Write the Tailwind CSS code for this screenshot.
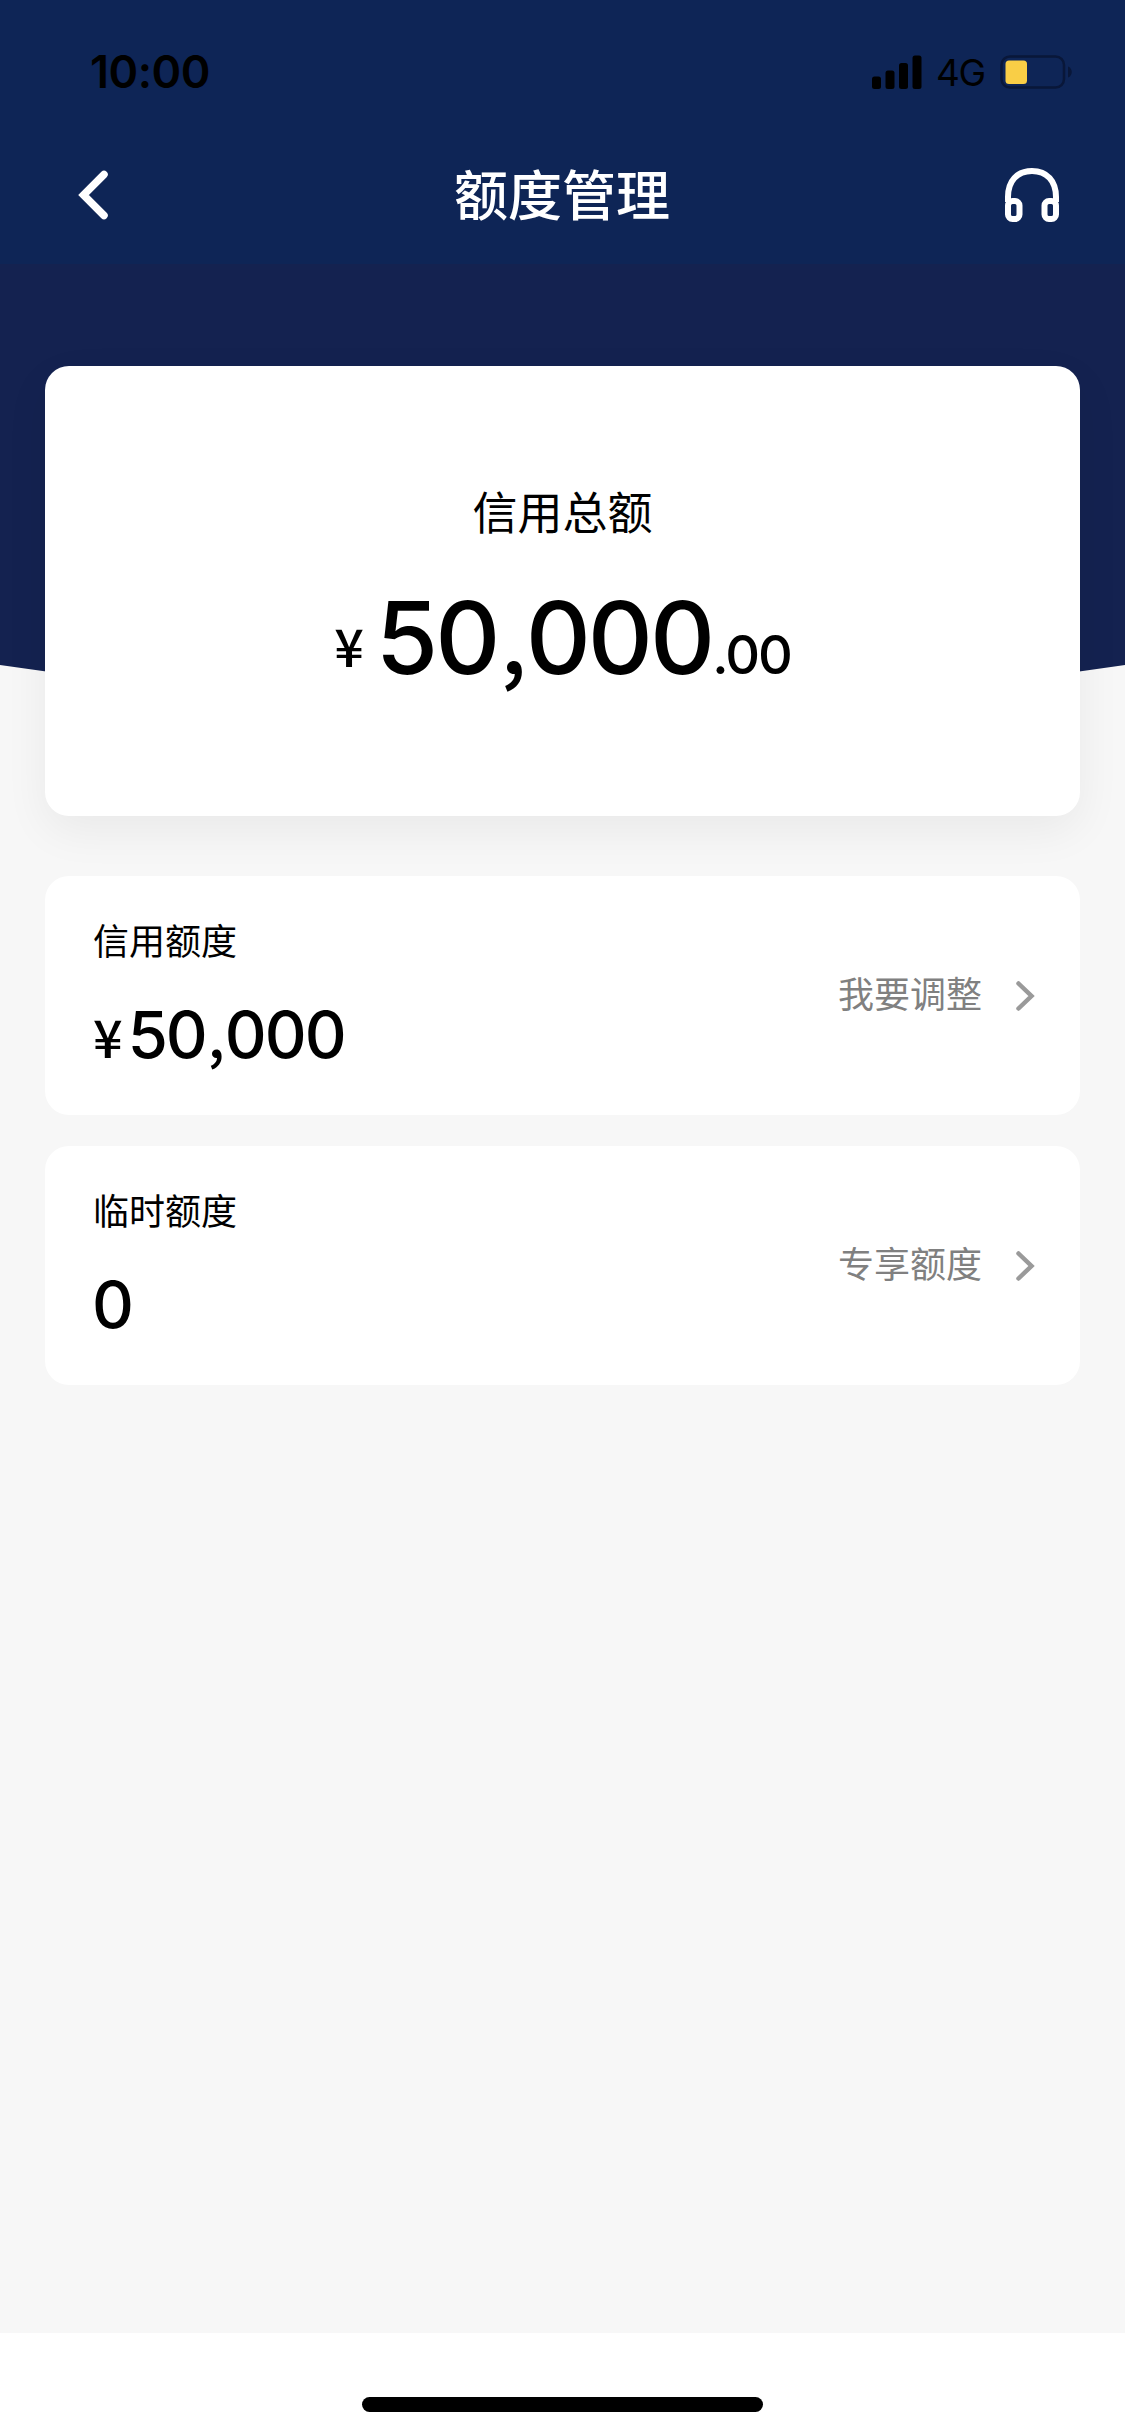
<!DOCTYPE html>
<html lang="zh-CN">
<head>
<meta charset="utf-8">
<title>额度管理</title>
<script src="https://cdn.jsdelivr.net/npm/@tailwindcss/browser@4"></script>
</head>
<body class="bg-[#f7f7f7] font-['Inter','Noto_Sans_CJK_SC',sans-serif] text-black">
<div class="relative flex h-[2435px] w-[1125px] flex-col overflow-hidden">
  <header class="relative z-10 h-[264px] bg-[#0e2556]">
    <div class="flex h-[143px] items-center justify-between pr-[53px] pl-[90px]">
      <span class="text-[45px] leading-none font-semibold tracking-[-0.5px]">10:00</span>
      <div class="flex items-center">
        <svg class="h-[34px] w-[50px]" viewBox="0 0 50 34">
          <rect x="0" y="21.500" width="9" height="12.500" rx="2.500"/>
          <rect x="13.500" y="15.500" width="9" height="18.500" rx="2.500"/>
          <rect x="27" y="8" width="9" height="26" rx="2.500"/>
          <rect x="40.500" y="0.500" width="9" height="33.500" rx="2.500"/>
        </svg>
        <span class="ml-[14px] w-[64px] pt-[2px] text-[37px] leading-none tracking-[-1.500px]">4G</span>
        <svg class="h-[34px] w-[72px]" viewBox="0 0 72 34">
          <rect x="1.500" y="1.500" width="62.500" height="31" rx="8.500" fill="none" stroke="#091739" stroke-width="2.500"/>
          <rect x="5.500" y="5.500" width="21.500" height="23.500" rx="3.500" fill="#f9ce46"/>
          <path d="M68 11.500c5 1.500 5 9.500 0 11z" fill="#091739"/>
        </svg>
      </div>
    </div>
    <div class="grid h-[104px] grid-cols-[1fr_auto_1fr] items-center pr-[65px] pl-[77px]">
      <svg class="h-[50px] w-[56px]" viewBox="0 0 56 50" fill="none" stroke="#fff" stroke-width="7.500" stroke-linecap="round"><path d="M27 4.500 6.500 25 27 45.500"/></svg>
      <h1 class="-ml-[13px] pt-[3px] text-[54px] leading-none font-medium text-white">额度管理</h1>
      <svg class="h-[56px] w-[56px] justify-self-end" viewBox="0 0 56 56" fill="none" stroke="#fff" stroke-width="6">
        <path d="M4 35V30C4 14 13 4 28 4s24 10 24 26v5"/>
        <rect x="4" y="34" width="11.500" height="18" rx="4.500"/>
        <rect x="40.500" y="34" width="11.500" height="18" rx="4.500"/>
      </svg>
    </div>
  </header>

  <svg class="absolute top-[264px] left-0 h-[480px] w-[1125px]" viewBox="0 0 1125 480"><path fill="#142250" d="M0 0H1125V401Q562.500 485 0 401Z"/></svg>

  <main class="relative flex flex-1 flex-col px-[45px] pt-[102px]">
    <section class="flex h-[450px] flex-col items-center rounded-[24px] bg-white pt-[124px] shadow-[0_15px_45px_rgba(0,0,0,0.06)]">
      <h2 class="text-[45px] leading-[48px]">信用总额</h2>
      <p class="mt-[39px] flex items-baseline leading-[120px] font-medium">
        <span class="relative -top-[7px] mr-[12px] font-['Noto_Sans_CJK_SC'] text-[52px] leading-none">¥</span>
        <span class="text-[101px] tracking-[-3px]">50<span class="mr-[2px] ml-[3px] font-['Noto_Sans_CJK_SC'] text-[88px] leading-none">,</span>000</span>
        <span class="text-[54px] tracking-[-2px]">.00</span>
      </p>
    </section>
    <section class="mt-[60px] flex h-[239px] items-center justify-between rounded-[24px] bg-white pr-[43px] pl-[48px]">
      <div class="flex flex-col pt-[6px]">
        <span class="text-[36px] leading-[40px]">信用额度</span>
        <span class="mt-[33px] flex items-baseline leading-[80px] font-medium"><span class="font-['Noto_Sans_CJK_SC'] text-[52px] leading-none">¥</span><span class="ml-[5px] text-[65px] tracking-[-2px]">50<span class="mr-[2px] ml-[2px] font-['Noto_Sans_CJK_SC'] text-[57px] leading-none">,</span>000</span></span>
      </div>
      <div class="flex items-center">
        <span class="-mt-[2px] text-[36px] leading-[40px] text-[#808080]">我要调整</span>
        <svg class="ml-[33px] h-[32px] w-[22px]" viewBox="0 0 22 32" fill="none" stroke="#9a9a9a" stroke-width="4.500" stroke-linecap="round"><path d="M3.500 3.500 16.500 16 3.500 28.500"/></svg>
      </div>
    </section>
    <section class="mt-[31px] flex h-[239px] items-center justify-between rounded-[24px] bg-white pr-[43px] pl-[48px]">
      <div class="flex flex-col pt-[6px]">
        <span class="text-[36px] leading-[40px]">临时额度</span>
        <span class="mt-[33px] flex items-baseline leading-[80px] font-medium"><span class="-ml-px text-[65px]">0</span></span>
      </div>
      <div class="flex items-center">
        <span class="-mt-[2px] text-[36px] leading-[40px] text-[#808080]">专享额度</span>
        <svg class="ml-[33px] h-[32px] w-[22px]" viewBox="0 0 22 32" fill="none" stroke="#9a9a9a" stroke-width="4.500" stroke-linecap="round"><path d="M3.500 3.500 16.500 16 3.500 28.500"/></svg>
      </div>
    </section>
  </main>

  <footer class="flex h-[102px] justify-center bg-white pt-[64px]">
    <div class="h-[15px] w-[401px] rounded-full bg-black"></div>
  </footer>
</div>
</body>
</html>
